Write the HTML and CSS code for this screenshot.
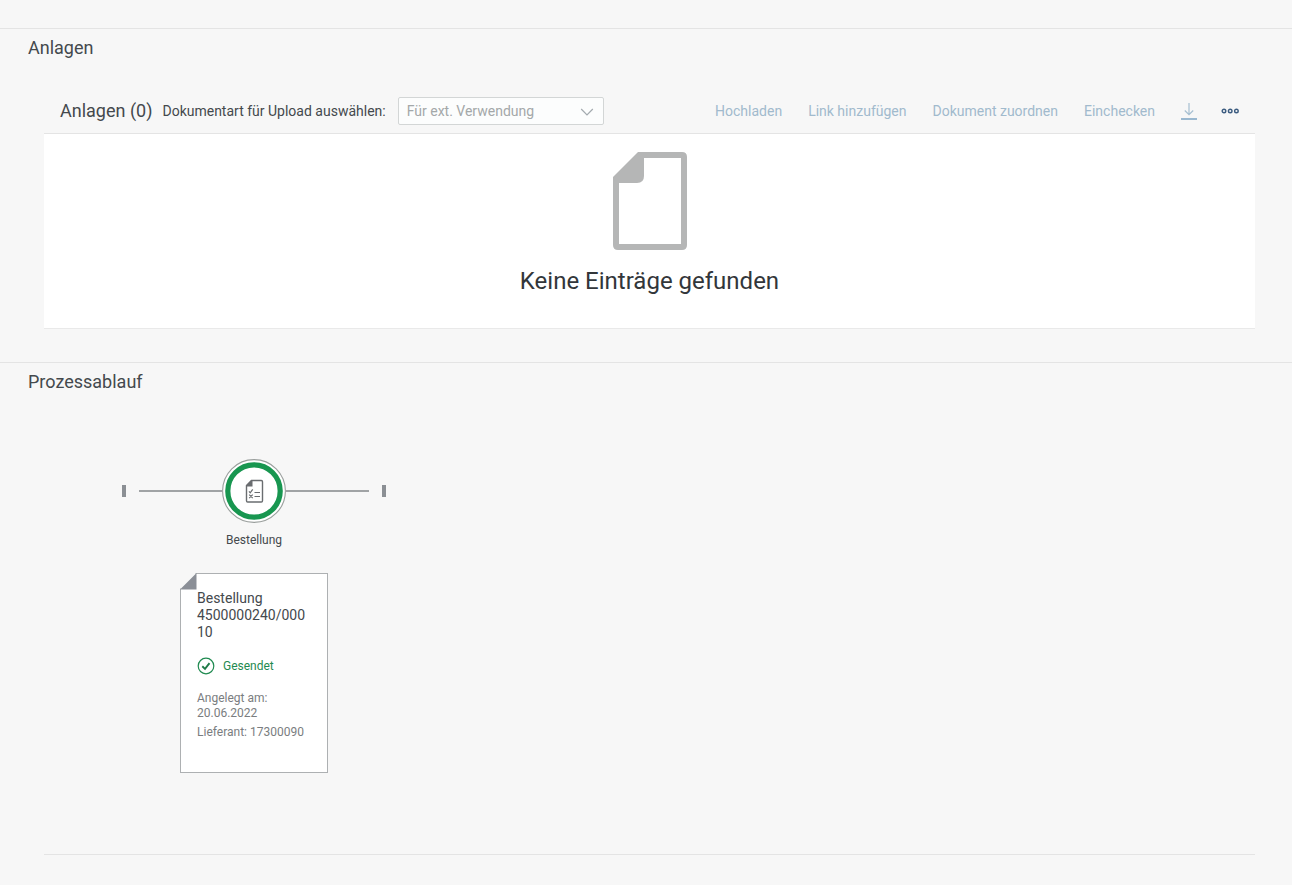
FILE: index.html
```html
<!DOCTYPE html>
<html lang="de">
<head>
<meta charset="utf-8">
<title>Bestellung</title>
<link rel="stylesheet" href="styles.css">
</head>
<body>
<main class="page">
  <section class="section attachments">
    <h2 class="section-title">Anlagen</h2>
    <div class="panel">
      <div class="toolbar">
        <h3 class="toolbar-title">Anlagen (0)</h3>
        <label class="toolbar-label" for="doctype">Dokumentart für Upload auswählen:</label>
        <div class="select-box">
          <select id="doctype" class="select" disabled>
            <option>Für ext. Verwendung</option>
          </select>
          <svg class="select-arrow" width="14" height="8" viewBox="0 0 14 8" aria-hidden="true"><path d="M1.2 1 7 6.8 12.8 1" fill="none" stroke="#a3aaaf" stroke-width="1.2"/></svg>
        </div>
        <div class="actions">
          <button class="action" type="button" disabled>Hochladen</button>
          <button class="action" type="button" disabled>Link hinzufügen</button>
          <button class="action" type="button" disabled>Dokument zuordnen</button>
          <button class="action" type="button" disabled>Einchecken</button>
          <div class="icon-actions">
            <button class="action" type="button" disabled aria-label="Herunterladen">
              <svg class="icon" width="16" height="18" viewBox="0 0 16 18"><path d="M8 1V12.500M3.800 8.500 8 12.700 12.200 8.500" fill="none" stroke="#a6bfd1" stroke-width="1.200"/><path d="M0 17H16" stroke="#9ab8d0" stroke-width="2"/></svg>
            </button>
            <button class="action" type="button" aria-label="Mehr">
              <svg class="icon" width="18" height="6" viewBox="0 0 18 6"><g fill="none" stroke="#3c5c80" stroke-width="1.400"><circle cx="3" cy="3" r="1.800"/><circle cx="9.200" cy="3" r="1.800"/><circle cx="15.400" cy="3" r="1.800"/></g></svg>
            </button>
          </div>
        </div>
      </div>
      <div class="empty">
        <svg class="empty-icon" width="74" height="98" viewBox="0 0 74 98" aria-hidden="true"><path fill="#b5b6b6" fill-rule="evenodd" d="M25 0H69Q74 0 74 5V93Q74 98 69 98H5Q0 98 0 93V25ZM31 6V24Q31 31 24 31H6V92H68V6Z"/></svg>
        <p class="empty-text">Keine Einträge gefunden</p>
      </div>
    </div>
  </section>

  <section class="section process">
    <h2 class="section-title">Prozessablauf</h2>
    <div class="flow">
      <div class="lane">
        <span class="lane-end"></span>
        <span class="lane-line"></span>
        <svg class="lane-node" width="64" height="64" viewBox="0 0 64 64" aria-hidden="true">
          <circle cx="32" cy="32" r="31.400" fill="#fff" stroke="#9a9f9d" stroke-width="1.100"/>
          <circle cx="32" cy="32" r="26.200" fill="#fff" stroke="#189650" stroke-width="5.200"/>
          <path d="M29.500 21.500H39.300Q40.500 21.500 40.500 22.700V41.800Q40.500 43 39.300 43H25.700Q24.500 43 24.500 41.800V26.500Z" fill="none" stroke="#6a6d70" stroke-width="1.400"/>
          <path d="M30.500 21V27.500H24V26.500L29.500 21Z" fill="#6a6d70"/>
          <path d="M27 32.300 28.200 33.800 30.700 30.300M27.200 35.700 30.700 39.200M30.700 35.700 27.200 39.200M32.500 33.500H38M32.500 37.500H38" fill="none" stroke="#6a6d70" stroke-width="1.200"/>
        </svg>
        <span class="lane-line"></span>
        <span class="lane-end"></span>
      </div>
      <p class="lane-label">Bestellung</p>
      <article class="card">
        <svg class="card-fold" width="17" height="17" viewBox="0 0 17 17" aria-hidden="true"><path d="M0 0H16L0 16Z" fill="#f7f7f7"/><path d="M0 16.500 16.500 0V16.500Z" fill="#8b8f97"/></svg>
        <h4 class="card-title">Bestellung 4500000240/00010</h4>
        <p class="status">
          <svg width="18" height="18" viewBox="0 0 18 18" aria-hidden="true"><circle cx="9" cy="9" r="7.800" fill="none" stroke="#1f8a50" stroke-width="1.200"/><path d="M5.300 9.300 8 11.900 12.500 6.200" fill="none" stroke="#1f7a48" stroke-width="1.900"/></svg>
          <span>Gesendet</span>
        </p>
        <p class="card-info">Angelegt am: 20.06.2022</p>
        <p class="card-info">Lieferant: 17300090</p>
      </article>
    </div>
    <hr class="end-line">
  </section>
</main>
</body>
</html>
```
FILE: styles.css
```css
* {
  box-sizing: border-box;
}

body {
  margin: 0;
  background: #fff;
  color: #44494d;
  font-family: Roboto, "Liberation Sans", sans-serif;
  font-size: 14px;
}

h2, h3, h4, p {
  margin: 0;
  font-weight: 400;
}

.page {
  min-height: 100vh;
  margin-right: 10px;
  padding-top: 28px;
  background: #f7f7f7;
}

.section {
  border-top: 1px solid #e4e4e4;
}

.section-title {
  padding: 7px 28px 5px;
  font-size: 18px;
  line-height: 24px;
}

.panel {
  margin: 24px 37px 33px 44px;
}

.toolbar {
  display: flex;
  align-items: center;
  height: 45px;
  padding: 0 16px;
  border-bottom: 1px solid #e4e4e4;
}

.toolbar-title {
  margin-right: 10px;
  font-size: 18px;
  line-height: 24px;
}

.toolbar-label {
  margin-right: 12px;
  font-size: 14px;
}

.select-box {
  position: relative;
  width: 206px;
}

.select {
  appearance: none;
  display: block;
  width: 100%;
  height: 28px;
  padding: 0 8px;
  border: 1px solid #d3d6d6;
  border-radius: 2px;
  background: #fcfdfd;
  color: #a4a8a9;
  font: inherit;
  opacity: 1;
}

.select-arrow {
  position: absolute;
  top: 11px;
  right: 10px;
  pointer-events: none;
}

.actions,
.icon-actions {
  display: flex;
  align-items: center;
  gap: 26px;
  margin-left: auto;
}

.icon-actions {
  gap: 24px;
}

.action {
  padding: 0;
  border: 0;
  background: none;
  color: #a1bacd;
  font: inherit;
}

.icon {
  display: block;
}

.empty {
  display: flex;
  flex-direction: column;
  align-items: center;
  padding: 18px 0 31px;
  border-bottom: 1px solid #e9e9e9;
  background: #fff;
}

.empty-text {
  margin-top: 15px;
  color: #32363a;
  font-size: 24px;
  line-height: 32px;
}

.flow {
  display: flex;
  flex-direction: column;
  align-items: center;
  width: 264px;
  margin: 60px 0 0 122px;
}

.lane {
  display: flex;
  align-items: center;
  width: 100%;
}

.lane-end {
  width: 4px;
  height: 12px;
  background: #8b8f94;
}

.lane-line {
  flex: 1;
  height: 2px;
  background: #a0a3a5;
}

.lane-end + .lane-line {
  margin-left: 13px;
}

.lane-line + .lane-end {
  margin-left: 13px;
}

.lane-label {
  margin-top: 8px;
  font-size: 12px;
  line-height: 18px;
}

.card {
  position: relative;
  width: 148px;
  min-height: 200px;
  margin-top: 24px;
  padding: 16px;
  border: 1px solid #adb0b2;
  background: #fff;
}

.card-fold {
  position: absolute;
  top: -1px;
  left: -1px;
}

.card-title {
  font-size: 14px;
  line-height: 17px;
  overflow-wrap: anywhere;
}

.status {
  display: flex;
  align-items: center;
  gap: 8px;
  margin: 16px 0;
  color: #1f8a50;
  font-size: 12px;
}

.card-info {
  margin-bottom: 4px;
  color: #7a7d80;
  font-size: 12px;
  line-height: 15px;
}

.end-line {
  height: 1px;
  margin: 81px 37px 0 44px;
  border: 0;
  background: #e4e4e4;
}
```
